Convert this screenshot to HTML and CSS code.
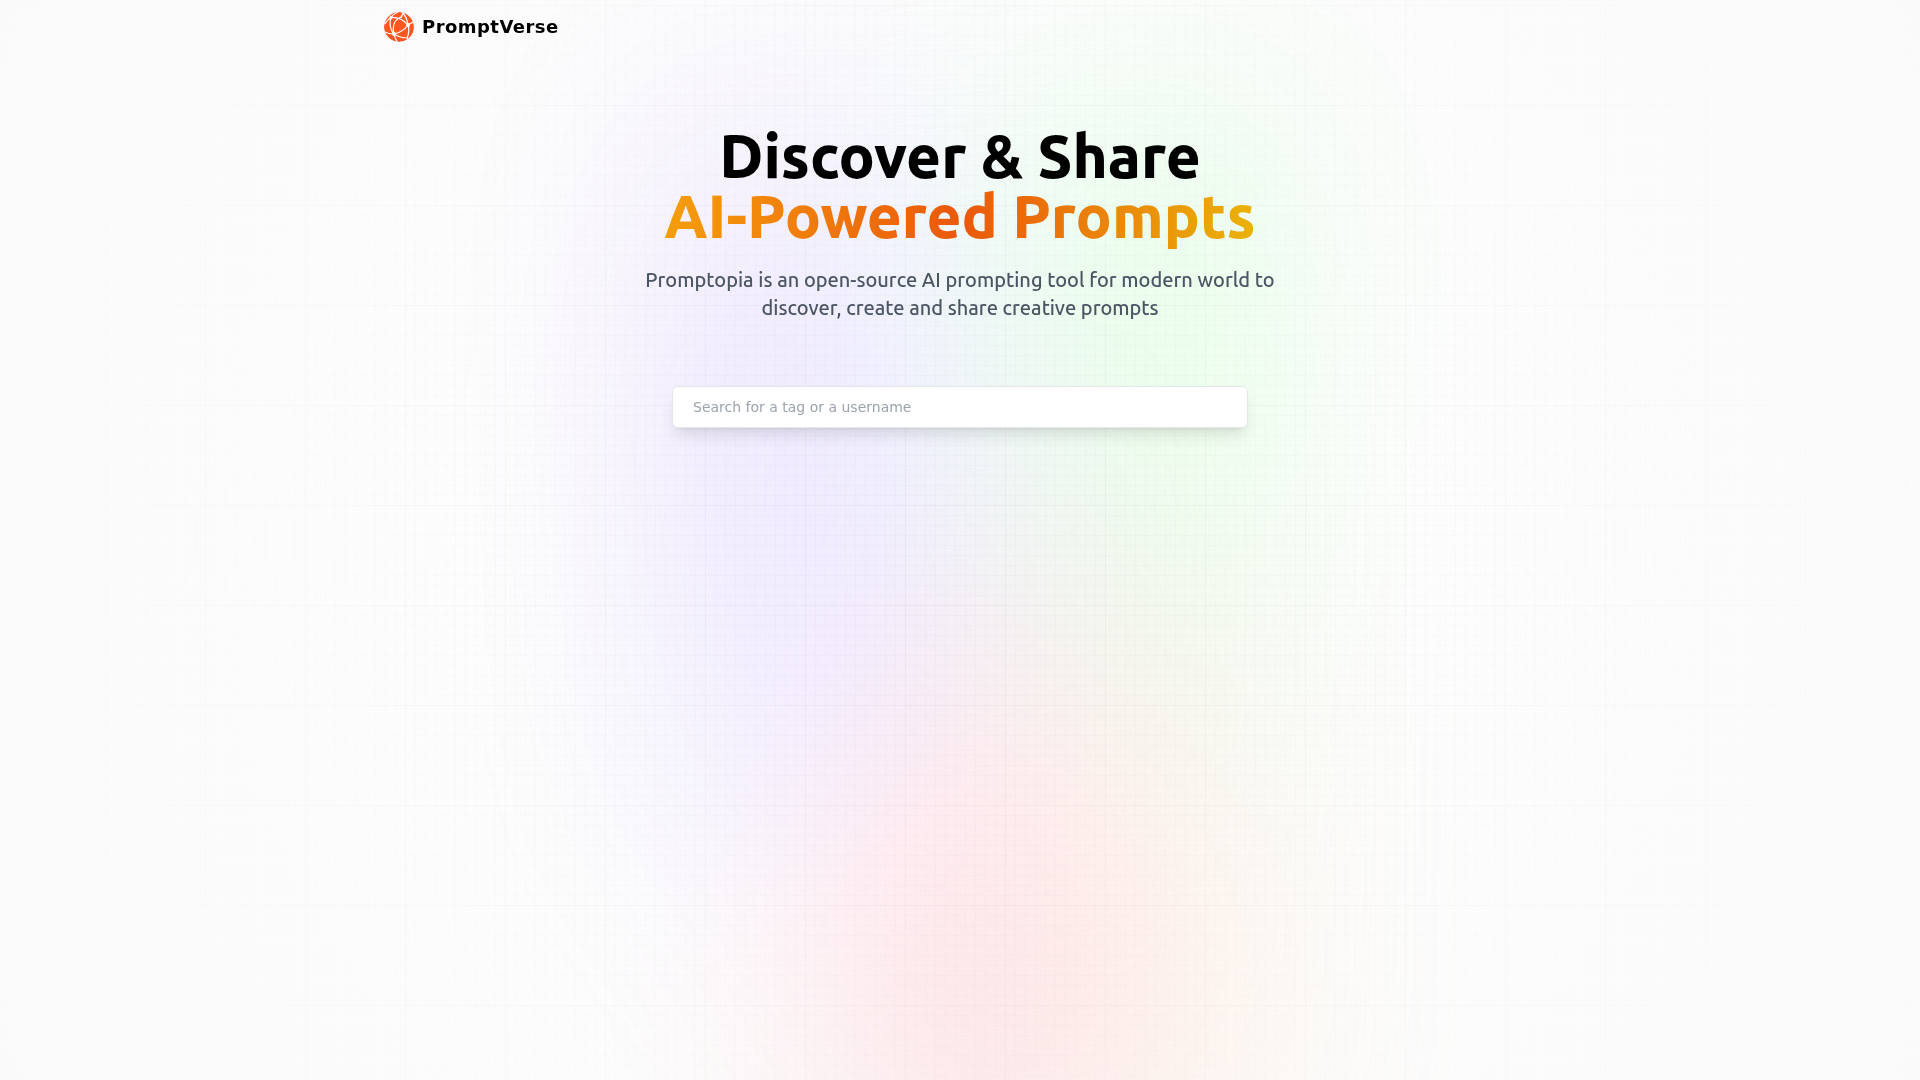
FILE: index.html
```html
<!DOCTYPE html>
<html lang="en">
<head>
<meta charset="utf-8">
<meta name="viewport" content="width=device-width, initial-scale=1">
<title>PromptVerse</title>
<link rel="stylesheet" href="styles.css">
</head>
<body>
<div class="backdrop" aria-hidden="true"><div class="gradient"></div></div>
<div class="app">
  <nav class="nav">
    <a class="brand" href="#">
      <svg class="logo" viewBox="0 0 30 30" aria-hidden="true">
        <defs><clipPath id="disc"><circle cx="15" cy="15" r="15"/></clipPath></defs>
        <g clip-path="url(#disc)">
          <circle cx="15" cy="15" r="15" fill="#ff5722"/>
          <g fill="none" stroke="#fff" stroke-width="1.2">
            <path d="M7 5.500Q9 2 14 0"/>
            <path d="M7 5.500Q3 8 1 12"/>
            <path d="M7 5.500Q17 5 24 13Q26 18 23 27"/>
            <path d="M18 0Q23 5 24 13Q19 20 10 22Q4 22 -1 19"/>
            <path d="M17 5Q7 9 10 22Q11 27 14 31"/>
            <path d="M7 5.500Q4 15 10 22Q16 26 24 26"/>
            <path d="M17 6Q18 2 21 0"/>
            <path d="M24 13L29 10"/>
          </g>
          <g fill="#fff"><circle cx="7" cy="5.500" r="1.700"/><circle cx="24" cy="13" r="2"/><circle cx="10" cy="22" r="2"/></g>
        </g>
      </svg>
      <span class="brand-name">PromptVerse</span>
    </a>
  </nav>
  <main class="hero">
    <h1 class="title">Discover &amp; Share<br><span class="accent">AI-Powered Prompts</span></h1>
    <p class="desc">Promptopia is an open-source AI prompting tool for modern world to discover, create and share creative prompts</p>
    <form class="search">
      <input class="search-input" type="text" aria-label="Search" placeholder="Search for a tag or a username">
    </form>
  </main>
</div>
</body>
</html>
```
FILE: styles.css
```css
*, *::before, *::after { box-sizing: border-box; }
body {
  margin: 0;
  background: #fff;
  font-family: "DejaVu Sans", sans-serif;
}
.backdrop {
  position: fixed;
  inset: 0;
  display: flex;
  justify-content: center;
  overflow: hidden;
  pointer-events: none;
}
.backdrop::before {
  content: "";
  position: absolute;
  inset: 0;
  z-index: 2;
  background: radial-gradient(circle, rgba(2, 0, 36, 0) 0, #fafafa 100%);
}
.backdrop::after {
  content: "";
  position: absolute;
  inset: 0;
  z-index: 1;
  background-image:
    linear-gradient(rgba(0, 0, 0, 0.025) 1px, transparent 1px),
    linear-gradient(90deg, rgba(0, 0, 0, 0.025) 1px, transparent 1px),
    linear-gradient(rgba(0, 0, 0, 0.020) 1px, transparent 1px),
    linear-gradient(90deg, rgba(0, 0, 0, 0.020) 1px, transparent 1px);
  background-size: 100px 100px, 100px 100px, 10px 10px, 10px 10px;
  background-position: 5px 5px;
}
.gradient {
  position: absolute;
  z-index: 3;
  top: 80px;
  width: 100%;
  max-width: 640px;
  height: 100%;
  background-image:
    radial-gradient(at 27% 37%, hsla(215, 98%, 61%, 1) 0, transparent 0%),
    radial-gradient(at 97% 21%, hsla(125, 98%, 72%, 1) 0, transparent 50%),
    radial-gradient(at 52% 99%, hsla(354, 98%, 61%, 1) 0, transparent 50%),
    radial-gradient(at 10% 29%, hsla(256, 96%, 67%, 1) 0, transparent 50%),
    radial-gradient(at 97% 96%, hsla(38, 60%, 74%, 1) 0, transparent 50%),
    radial-gradient(at 33% 50%, hsla(222, 67%, 73%, 1) 0, transparent 50%),
    radial-gradient(at 79% 53%, hsla(343, 68%, 79%, 1) 0, transparent 50%);
  filter: blur(100px) saturate(150%);
  opacity: 0.15;
}
.app {
  position: relative;
  max-width: 1280px;
  min-height: 100vh;
  margin: 0 auto;
  padding: 0 64px;
}
.nav {
  display: flex;
  padding-top: 12px;
  margin-bottom: 64px;
}
.brand {
  display: flex;
  align-items: center;
  gap: 8px;
  color: #000;
  text-decoration: none;
}
.logo { width: 30px; height: 30px; }
.brand-name {
  font-size: 18px;
  line-height: 28px;
  font-weight: 600;
  letter-spacing: 0.025em;
}
.hero {
  display: flex;
  flex-direction: column;
  align-items: center;
  padding-top: 20px;
  text-align: center;
}
.title {
  margin: 0;
  font: 800 60px/60px Ubuntu, "Noto Sans", sans-serif;
  color: #000;
}
.accent {
  background: linear-gradient(to right, #f59e0b, #ea580c, #eab308);
  -webkit-background-clip: text;
  background-clip: text;
  color: transparent;
}
.desc {
  max-width: 672px;
  margin: 20px 0 64px;
  font: 500 20px/28px Ubuntu, "Noto Sans", sans-serif;
  color: #4b5563;
}
.search { width: 100%; max-width: 576px; }
.search-input {
  display: block;
  width: 100%;
  padding: 10px 48px 10px 20px;
  border: 1px solid #e5e7eb;
  border-radius: 6px;
  background: #fff;
  box-shadow: 0 10px 15px -3px rgba(0, 0, 0, 0.1), 0 4px 6px -4px rgba(0, 0, 0, 0.1);
  font: 400 14px/20px "DejaVu Sans", sans-serif;
  color: #111827;
}
.search-input::placeholder { color: #9ca3af; opacity: 1; }
```
